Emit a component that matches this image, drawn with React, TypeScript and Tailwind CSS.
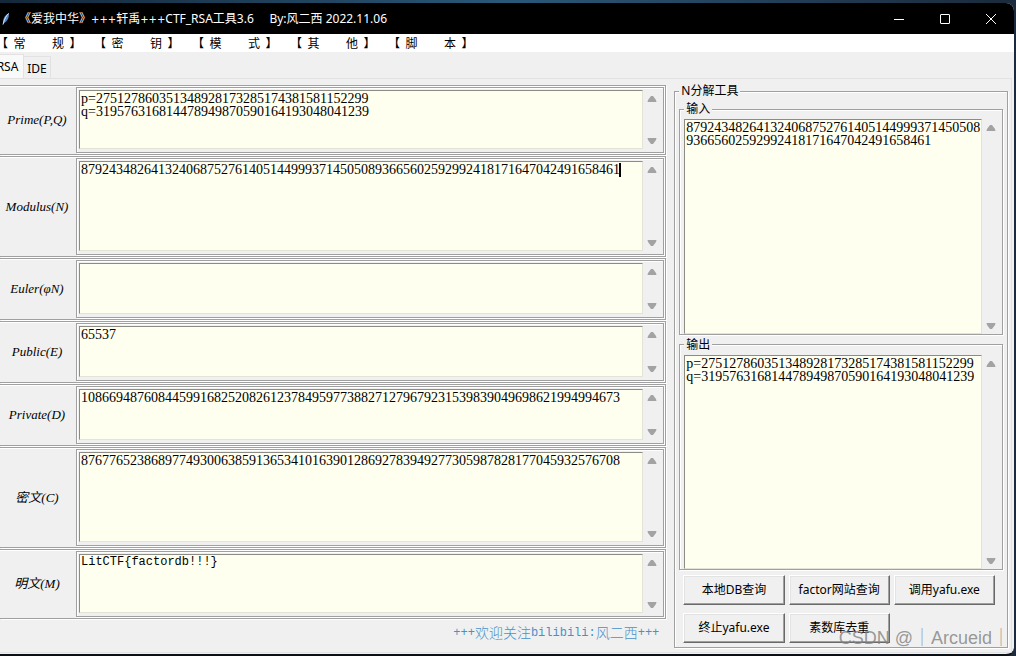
import React, { useState } from "react";

interface Field {
  id: string;
  label: string;
  value: string;
  caret?: boolean;
  mono?: boolean;
}

const FACTORS =
  "p=275127860351348928173285174381581152299\nq=319576316814478949870590164193048041239";
const MODULUS =
  "87924348264132406875276140514499937145050893665602592992418171647042491658461";

const FIELDS: Field[] = [
  { id: "prime", label: "Prime(P,Q)", value: FACTORS },
  { id: "modulus", label: "Modulus(N)", value: MODULUS, caret: true },
  { id: "euler", label: "Euler(φN)", value: "" },
  { id: "public", label: "Public(E)", value: "65537" },
  {
    id: "private",
    label: "Private(D)",
    value:
      "10866948760844599168252082612378495977388271279679231539839049698621994994673",
  },
  {
    id: "cipher",
    label: "密文(C)",
    value:
      "87677652386897749300638591365341016390128692783949277305987828177045932576708",
  },
  { id: "plain", label: "明文(M)", value: "LitCTF{factordb!!!}", mono: true },
];

const MENUS = [
  ["常", "规"],
  ["密", "钥"],
  ["模", "式"],
  ["其", "他"],
  ["脚", "本"],
];

const ACTIONS = [
  "本地DB查询",
  "factor网站查询",
  "调用yafu.exe",
  "终止yafu.exe",
  "素数库去重",
];

// width of one digit in the text boxes
const DIGIT = 7;

const groove =
  "border border-[#a0a0a0] shadow-[1px_1px_0_#fff,inset_1px_1px_0_#fff]";

interface TextBoxProps {
  id: string;
  value: string;
  label?: string;
  caret?: boolean;
  mono?: boolean;
}

const TextBox: React.FC<TextBoxProps> = ({ id, value, label, caret, mono }) => {
  const [text, setText] = useState(value);
  const font = mono
    ? "font-['Liberation_Mono','Noto_Sans_CJK_SC',monospace] text-[12px]"
    : "font-['Liberation_Serif','Noto_Sans_CJK_SC',serif] text-[14px]";

  return (
    <div className="relative flex min-h-0 flex-1">
      <textarea
        id={id}
        aria-label={label}
        value={text}
        onChange={(e) => setText(e.target.value)}
        spellCheck={false}
        className={`mr-px block min-w-0 flex-1 resize-none overflow-hidden break-all border border-t-[#8c8c84] border-l-[#8c8c84] border-r-[#e3e3d6] border-b-[#e3e3d6] bg-[#fffff0] pt-px pl-px leading-[13px] text-black outline-none ${font}`}
      />
      {caret && (
        <span
          className="absolute top-0.5 h-3.5 w-0.5 bg-black"
          style={{ left: text.length * DIGIT + 1 }}
        />
      )}
      <div className="flex w-4 flex-col items-center justify-between pt-1.5 pb-[5px]">
        <button type="button" aria-label="向上滚动">
          <svg width="10" height="6" viewBox="0 0 10 6" className="block">
            <path d="M4 0h2l3 4 .5 2h-9L1 4z" fill="#a3a3a3" />
          </svg>
        </button>
        <button type="button" aria-label="向下滚动">
          <svg width="10" height="6" viewBox="0 0 10 6" className="block">
            <path d="M4 6h2l3-4 .5-2h-9L1 2z" fill="#a3a3a3" />
          </svg>
        </button>
      </div>
    </div>
  );
};

const FieldRow: React.FC<{ field: Field }> = ({ field }) => (
  <div className="flex min-h-0 border-y border-r border-[#a0a0a0] mb-px mr-px shadow-[1px_1px_0_#fff,inset_0_1px_0_#fff]">
    <label
      htmlFor={field.id}
      className="flex w-[76px] shrink-0 items-center justify-center pr-0.5 font-['Liberation_Serif','Noto_Sans_CJK_SC',serif] text-[13px] italic"
    >
      {field.label}
    </label>
    <div className={`mt-px mr-px mb-px flex min-w-0 flex-1 pt-0.5 pr-[3px] pb-[3px] pl-0.5 ${groove}`}>
      <TextBox
        id={field.id}
        value={field.value}
        caret={field.caret}
        mono={field.mono}
      />
    </div>
  </div>
);

const IoGroup: React.FC<{ id: string; title: string; value: string }> = ({
  id,
  title,
  value,
}) => (
  <fieldset className={`flex min-h-0 min-w-0 flex-1 pt-0.5 pr-[3px] pl-1 ${groove}`}>
    <legend className="bg-[#f0f0f0] px-0.5 leading-4">{title}</legend>
    <TextBox id={id} value={value} label={title} />
  </fieldset>
);

const Pluses = () => (
  <span className="font-['DejaVu_Sans',sans-serif] text-[10px]">+++</span>
);

const TitleBar = () => (
  <header className="flex h-[31px] shrink-0 items-center bg-black text-white">
    <svg width="12" height="14" viewBox="0 0 12 14" className="mr-[7px] shrink-0">
      <path d="M9 1C5 3 3 6 3 10l1 1c4-2 5-6 5-10z" fill="#4f86c6" />
      <path d="M8.500 1.500C6 4 4.500 7 3 12.500" stroke="#dceaf8" fill="none" />
    </svg>
    <h1 className="flex-1 whitespace-pre">
      《爱我中华》
      <Pluses />
      轩禹
      <Pluses />
      CTF_RSA工具3.6{"     "}By:风二西 2022.11.06
    </h1>
    <button type="button" aria-label="最小化" className="flex h-full w-[46px] items-center justify-center">
      <svg width="10" height="10" viewBox="0 0 10 10" stroke="#fff">
        <path d="M0 5.500h10" />
      </svg>
    </button>
    <button type="button" aria-label="最大化" className="flex h-full w-[46px] items-center justify-center">
      <svg width="10" height="10" viewBox="0 0 10 10" stroke="#fff" fill="none">
        <rect x="0.5" y="0.5" width="9" height="9" rx="0.5" />
      </svg>
    </button>
    <button type="button" aria-label="关闭" className="flex h-full w-[46px] items-center justify-center">
      <svg width="10" height="10" viewBox="0 0 10 10" stroke="#fff">
        <path d="M0 0l10 10M10 0L0 10" />
      </svg>
    </button>
  </header>
);

const App = () => {
  return (
    <div className="h-screen min-h-[480px] bg-linear-to-r from-[#14283a] via-[#2a5878] to-[#1b2a3c] pt-[3px] pr-0.5 font-['Noto_Sans','Noto_Sans_CJK_SC',sans-serif] text-[12px] text-black">
      <div className="relative flex h-full flex-col overflow-hidden rounded-r-lg border-b-2 border-[#0b0f16] bg-[#f0f0f0]">
        <TitleBar />

        {/* 菜单栏 */}
        <nav className="flex h-[18px] shrink-0 items-center bg-white font-['Noto_Sans_CJK_SC',sans-serif]">
          <div className="-ml-1 flex gap-[11px]">
            {MENUS.map(([first, last]) => (
              <button key={first} type="button" className="flex w-[87px] whitespace-pre leading-[18px]">
                {`【  ${first}　　 ${last}  】`}
              </button>
            ))}
          </div>
        </nav>

        {/* 标签页 */}
        <div role="tablist" className="mr-0.5 flex h-[27px] shrink-0 items-end border-b border-[#e2e2e2]">
          <button
            type="button"
            role="tab"
            aria-selected="true"
            className="-ml-2 h-6 w-8 border-t border-r border-[#e2e2e2] bg-[#f9f9f9]"
          >
            RSA
          </button>
          <button
            type="button"
            role="tab"
            aria-selected="false"
            className="h-[22px] w-[27px] border-t border-r border-[#e2e2e2] pt-0.5"
          >
            IDE
          </button>
        </div>

        <main className="mr-0.5 mb-px grid min-h-0 flex-1 grid-cols-[2fr_1fr] gap-x-[7px] border-r border-b border-[#e2e2e2] pr-[3px] pb-[3px]">
          <section className="flex min-h-0 min-w-0 flex-col pt-1.5">
            <div className="grid min-h-0 flex-1 grid-rows-[71fr_102fr_63fr_63fr_63fr_102fr_71fr]">
              {FIELDS.map((field) => (
                <FieldRow key={field.id} field={field} />
              ))}
            </div>
            <p className="flex h-[29px] shrink-0 items-center justify-end pr-2 pb-1 font-['Liberation_Mono',monospace] text-[12px] text-[#4a90c8]">
              +++
              <span className="font-['Noto_Sans_CJK_SC',sans-serif] text-[14px] font-light">欢迎关注</span>
              bilibili:
              <span className="font-['Noto_Sans_CJK_SC',sans-serif] text-[14px] font-light">风二西</span>
              +++
            </p>
          </section>

          {/* N 分解 */}
          <fieldset className={`mt-1 mb-px flex min-h-0 min-w-0 flex-col pt-0.5 pr-1 pb-1 pl-1 ${groove}`}>
            <legend className="bg-[#f0f0f0] px-0.5 leading-4">N分解工具</legend>
            <div className="flex min-h-0 flex-1 flex-col gap-0.5">
              <IoGroup id="input" title="输入" value={MODULUS} />
              <IoGroup id="output" title="输出" value={FACTORS} />
            </div>
            <div className="mt-[5px] grid grid-cols-3 gap-x-1 gap-y-2 pr-2 pl-1">
              {ACTIONS.map((action) => (
                <button
                  key={action}
                  type="button"
                  className="h-[30px] whitespace-nowrap border border-t-white border-l-white border-r-[#696969] border-b-[#696969] shadow-[inset_-1px_-1px_0_#a0a0a0,inset_1px_1px_0_#e3e3e3]"
                >
                  {action}
                </button>
              ))}
            </div>
          </fieldset>
        </main>

        <span className="pointer-events-none absolute right-1 bottom-1 whitespace-pre font-['Liberation_Sans','Noto_Sans_CJK_SC',sans-serif] text-[18px] leading-6 font-light text-[#808080]/80">
          CSDN @｜Arcueid｜
        </span>
      </div>
    </div>
  );
};

export default App;
